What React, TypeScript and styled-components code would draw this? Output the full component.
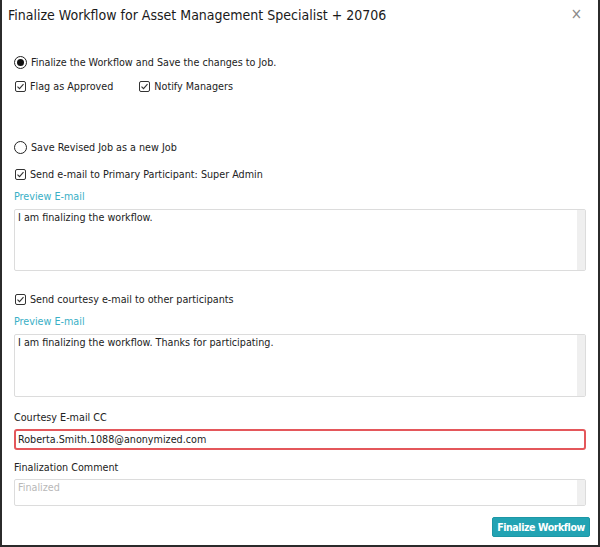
import styled, { createGlobalStyle } from "styled-components";

const GlobalStyle = createGlobalStyle`
    html, body {
        margin: 0;
        padding: 0;
        background: #ffffff;
    }
    * {
        box-sizing: border-box;
    }
`;

const Dialog = styled.div`
    width: 600px;
    height: 547px;
    background-color: #ffffff;
    border-left: 2px solid #2b2b2b;
    border-right: 2px solid #2b2b2b;
    border-bottom: 2px solid #2b2b2b;
    font-family: "DejaVu Sans Condensed", "DejaVu Sans", sans-serif;
    font-size: 10.7px;
    color: #222222;
    display: flex;
    flex-direction: column;
`;

const Header = styled.div`
    display: flex;
    justify-content: space-between;
    align-items: center;
    padding: 5px 16px 0 6px;
    height: 24px;
`;

const Title = styled.h1`
    margin: 0;
    font-size: 14px;
    font-weight: normal;
    color: #1a1a1a;
`;

const Close = styled.span`
    color: #8a8a8a;
    font-size: 15px;
    line-height: 1;
`;

const Body = styled.div`
    padding: 31px 12px 0 12px;
    display: flex;
    flex-direction: column;
`;

const OptionRow = styled.label<{ $gap?: number }>`
    display: flex;
    align-items: center;
    gap: 25px;
    margin-top: ${p => p.$gap ?? 0}px;
    height: 14px;
`;

const Choice = styled.span`
    display: inline-flex;
    align-items: center;
    gap: 4px;
`;

const Radio = styled.span<{ $on?: boolean }>`
    width: 13px;
    height: 13px;
    border-radius: 50%;
    border: 1px solid #222;
    display: inline-flex;
    align-items: center;
    justify-content: center;
    &::after {
        content: "";
        width: 7px;
        height: 7px;
        border-radius: 50%;
        background: ${p => (p.$on ? "#111" : "transparent")};
    }
`;

const CheckBox = styled.span`
    display: inline-flex;
    margin-left: 1px;
`;

const Check = () => (
    <CheckBox>
        <svg width="11" height="11" viewBox="0 0 11 11">
            <rect x="0.5" y="0.5" width="10" height="10" rx="1.5" fill="#fff" stroke="#333" />
            <path d="M2.5 5.6 L4.5 7.6 L8.5 3.2" fill="none" stroke="#333" strokeWidth="1.1" />
        </svg>
    </CheckBox>
);

const Link = styled.a`
    color: #3aafc6;
    text-decoration: none;
    margin-top: 9px;
    height: 14px;
`;

const TextBox = styled.div<{ $h: number; $gap?: number; $muted?: boolean }>`
    margin-top: ${p => p.$gap ?? 5}px;
    height: ${p => p.$h}px;
    border: 1px solid #dcdcdc;
    border-radius: 2px;
    padding: 1px 3px;
    position: relative;
    color: ${p => (p.$muted ? "#b8b8b8" : "#222")};
    &::after {
        content: "";
        position: absolute;
        top: 0;
        right: 0;
        bottom: 0;
        width: 8px;
        background: #efefef;
    }
`;

const FieldLabel = styled.div<{ $gap: number }>`
    margin-top: ${p => p.$gap}px;
    height: 14px;
`;

const EmailInput = styled.div`
    margin-top: 4px;
    height: 21px;
    border: 2px solid #e4575b;
    border-radius: 3px;
    padding: 1px 2px;
    display: flex;
    align-items: center;
`;

const Footer = styled.div`
    display: flex;
    justify-content: flex-end;
    padding: 11px 8px 0 0;
`;

const Button = styled.button`
    background: #22a3b3;
    color: #ffffff;
    border: 1px solid #1c97a6;
    border-radius: 2px;
    font-family: inherit;
    font-size: 10.5px;
    font-weight: bold;
    letter-spacing: -0.4px;
    height: 20px;
    width: 98px;
    padding: 0;
`;

export function App() {
    return (
        <>
            <GlobalStyle />
            <Dialog>
                <Header>
                    <Title>Finalize Workflow for Asset Management Specialist + 20706</Title>
                    <Close>×</Close>
                </Header>
                <Body>
                    <OptionRow>
                        <Choice><Radio $on />Finalize the Workflow and Save the changes to Job.</Choice>
                    </OptionRow>
                    <OptionRow $gap={10}>
                        <Choice><Check />Flag as Approved</Choice>
                        <Choice><Check />Notify Managers</Choice>
                    </OptionRow>
                    <OptionRow $gap={47}>
                        <Choice><Radio />Save Revised Job as a new Job</Choice>
                    </OptionRow>
                    <OptionRow $gap={13}>
                        <Choice><Check />Send e-mail to Primary Participant: Super Admin</Choice>
                    </OptionRow>
                    <Link>Preview E-mail</Link>
                    <TextBox $h={62}>I am finalizing the workflow.</TextBox>
                    <OptionRow $gap={21}>
                        <Choice><Check />Send courtesy e-mail to other participants</Choice>
                    </OptionRow>
                    <Link>Preview E-mail</Link>
                    <TextBox $h={63}>I am finalizing the workflow. Thanks for participating.</TextBox>
                    <FieldLabel $gap={14}>Courtesy E-mail CC</FieldLabel>
                    <EmailInput>Roberta.Smith.1088@anonymized.com</EmailInput>
                    <FieldLabel $gap={11}>Finalization Comment</FieldLabel>
                    <TextBox $h={27} $gap={4} $muted>Finalized</TextBox>
                </Body>
                <Footer>
                    <Button>Finalize Workflow</Button>
                </Footer>
            </Dialog>
        </>
    );
}

export default App;
